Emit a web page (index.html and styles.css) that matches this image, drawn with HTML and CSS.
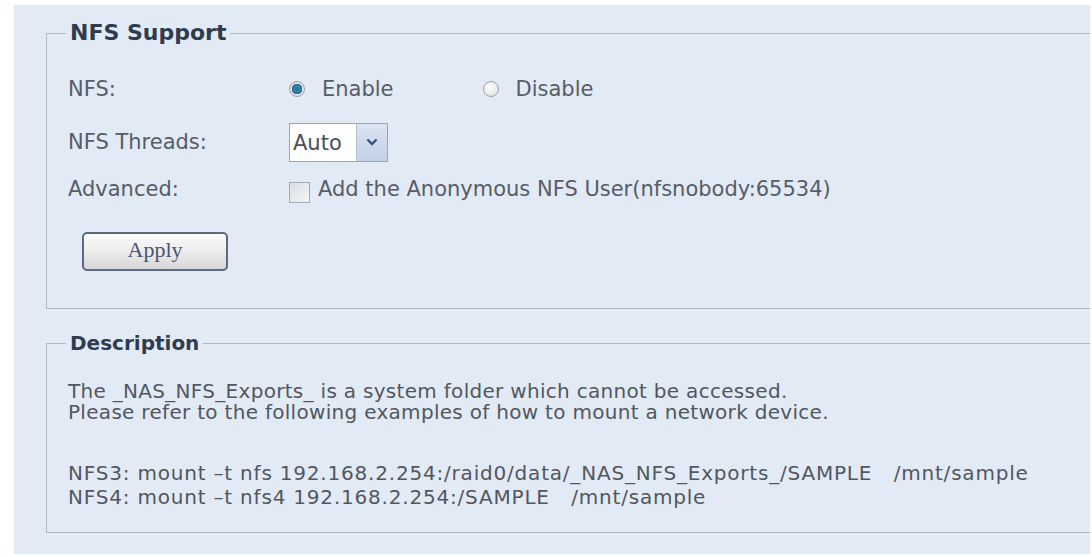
FILE: index.html
```html
<!DOCTYPE html>
<html>
<head>
<meta charset="utf-8">
<title>NFS</title>
<link rel="stylesheet" href="styles.css">
</head>
<body>
<div class="panel">
  <fieldset class="group group-nfs">
    <legend class="legend-big">NFS Support</legend>
    <div class="row row-nfs">
      <span class="label">NFS:</span>
      <div class="radios">
        <label class="radio"><span class="dot on"></span><span>Enable</span></label>
        <label class="radio"><span class="dot"></span><span>Disable</span></label>
      </div>
    </div>
    <div class="row row-threads">
      <span class="label">NFS Threads:</span>
      <div class="select">
        <span class="sel-val">Auto</span>
        <span class="sel-arrow"><svg width="12" height="8" viewBox="0 0 12 8"><path d="M1.5 1.5 L6 6 L10.5 1.5" fill="none" stroke="#33507f" stroke-width="2.4"/></svg></span>
      </div>
    </div>
    <div class="row row-adv">
      <span class="label">Advanced:</span>
      <label class="check"><span class="cbox"></span><span>Add the Anonymous NFS User(nfsnobody:65534)</span></label>
    </div>
    <button class="apply" type="button">Apply</button>
  </fieldset>
  <fieldset class="group group-desc">
    <legend class="legend-small">Description</legend>
    <p class="desc desc-intro">The _NAS_NFS_Exports_ is a system folder which cannot be accessed.
Please refer to the following examples of how to mount a network device.</p>
    <p class="desc desc-cmd">NFS3: mount –t nfs 192.168.2.254:/raid0/data/_NAS_NFS_Exports_/SAMPLE   /mnt/sample
NFS4: mount –t nfs4 192.168.2.254:/SAMPLE   /mnt/sample</p>
  </fieldset>
</div>
</body>
</html>
```

FILE: styles.css
```css
html, body {
  margin: 0;
  padding: 0;
  background: #ffffff;
}

body {
  font-family: "DejaVu Sans", "Liberation Sans", sans-serif;
  color: #575c67;
}

.panel {
  margin: 5px 2px 0 14px;
  height: 549px;
  background: #e2eaf5;
  padding-top: 16px;
  box-sizing: border-box;
  overflow: hidden;
}

.group {
  margin: 0 -30px 0 32px;
  padding: 0 0 0 21px;
  border: 1px solid #b1b9c4;
  min-width: 0;
}

.group-nfs {
  padding-bottom: 37px;
}

.group-desc {
  margin-top: 22px;
  padding-bottom: 23px;
}

.group legend {
  margin-left: -2px;
  padding: 0 4px;
  line-height: 24px;
  font-weight: bold;
  color: #2f3c4f;
}

.legend-big {
  font-size: 22px;
}

.legend-small {
  font-size: 20px;
}

.row {
  display: flex;
  align-items: center;
  font-size: 21px;
}

.row-nfs {
  margin-top: 25px;
  height: 38px;
}

.row-threads {
  margin-top: 14px;
  height: 40px;
}

.row-adv {
  margin-top: 14px;
  height: 26px;
}

.label {
  width: 221px;
  flex: none;
}

.radios {
  display: flex;
  align-items: center;
  gap: 89px;
}

.radio {
  display: flex;
  align-items: center;
  gap: 17px;
}

.dot {
  width: 14px;
  height: 14px;
  border-radius: 50%;
  border: 1px solid #9aa3ad;
  background: radial-gradient(circle at 40% 35%, #ffffff, #d9dde2);
  box-sizing: content-box;
}

.dot.on {
  background: radial-gradient(circle at 50% 50%, #1d6f95 0, #2a8ab3 3px, #3d5f78 5px, #e8ecf0 5.5px, #c9ced5 8px);
}

.select {
  display: flex;
  height: 39px;
  border: 1px solid #9ba6b4;
  box-sizing: border-box;
  background: #ffffff;
  margin-top: 1px;
}

.sel-val {
  width: 66px;
  padding-left: 3px;
  box-sizing: border-box;
  display: flex;
  align-items: center;
  color: #4b505a;
}

.sel-arrow {
  width: 31px;
  border-left: 1px solid #b3bfcf;
  background: linear-gradient(#dbe5f2, #c2d1e6);
  display: flex;
  align-items: flex-start;
  justify-content: center;
  padding-top: 14px;
  box-sizing: border-box;
}

.check {
  display: flex;
  align-items: center;
  gap: 8px;
}

.cbox {
  width: 21px;
  height: 21px;
  border: 1px solid #a4abb4;
  background: linear-gradient(135deg, #d9dde2, #f3f5f7);
  margin-top: 6px;
  box-sizing: border-box;
}

.apply {
  display: block;
  margin: 30px 0 0 14px;
  width: 146px;
  height: 39px;
  border: 2px solid #5b6a80;
  border-radius: 5px;
  background: linear-gradient(#fbfbfb 0%, #eeeeee 45%, #d6d6d8 100%);
  font-family: "Liberation Serif", serif;
  font-size: 22px;
  color: #4a5570;
  padding: 0 0 4px 0;
}

.desc {
  margin: 0;
  white-space: pre;
  font-size: 20px;
  letter-spacing: 0.3px;
  color: #52575f;
}

.desc-intro {
  padding-top: 26px;
  line-height: 21px;
}

.desc-cmd {
  margin-top: 38px;
  line-height: 24px;
  letter-spacing: 0.8px;
}
```
